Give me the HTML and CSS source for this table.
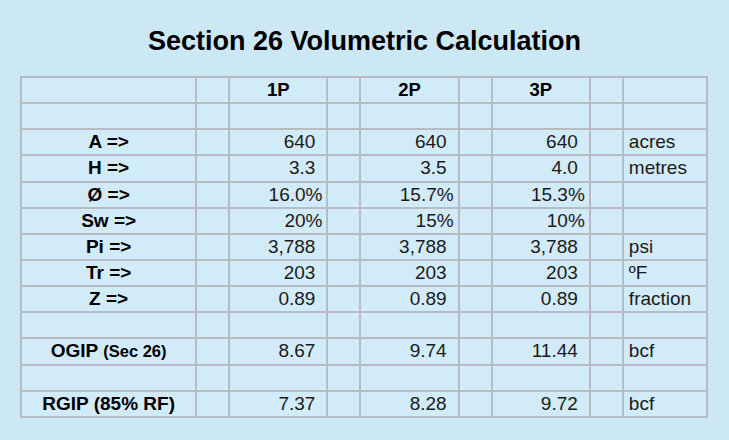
FILE: index.html
```html
<!DOCTYPE html>
<html>
<head>
<meta charset="utf-8">
<link rel="stylesheet" href="styles.css">
</head>
<body>
<div class="page">
  <h1 class="title">Section 26 Volumetric Calculation</h1>
  <table class="calc">
    <colgroup>
      <col class="c-label"><col class="c-gap"><col class="c-val"><col class="c-gap"><col class="c-val"><col class="c-gap2"><col class="c-val"><col class="c-gap"><col class="c-unit">
    </colgroup>
    <tr class="head"><td></td><td></td><td class="h">1P</td><td></td><td class="h">2P</td><td></td><td class="h">3P</td><td></td><td></td></tr>
    <tr><td></td><td></td><td></td><td></td><td></td><td></td><td></td><td></td><td></td></tr>
    <tr><td class="lbl">A =&gt;</td><td></td><td class="num">640</td><td></td><td class="num">640</td><td></td><td class="num">640</td><td></td><td class="unit">acres</td></tr>
    <tr><td class="lbl">H =&gt;</td><td></td><td class="num">3.3</td><td></td><td class="num">3.5</td><td></td><td class="num">4.0</td><td></td><td class="unit">metres</td></tr>
    <tr><td class="lbl">Ø =&gt;</td><td></td><td class="num pct">16.0%</td><td></td><td class="num pct">15.7%</td><td></td><td class="num pct">15.3%</td><td></td><td class="unit"></td></tr>
    <tr><td class="lbl">Sw =&gt;</td><td></td><td class="num pct">20%</td><td></td><td class="num pct">15%</td><td></td><td class="num pct">10%</td><td></td><td class="unit"></td></tr>
    <tr><td class="lbl">Pi =&gt;</td><td></td><td class="num">3,788</td><td></td><td class="num">3,788</td><td></td><td class="num">3,788</td><td></td><td class="unit">psi</td></tr>
    <tr><td class="lbl">Tr =&gt;</td><td></td><td class="num">203</td><td></td><td class="num">203</td><td></td><td class="num">203</td><td></td><td class="unit">ºF</td></tr>
    <tr><td class="lbl">Z =&gt;</td><td></td><td class="num">0.89</td><td></td><td class="num">0.89</td><td></td><td class="num">0.89</td><td></td><td class="unit">fraction</td></tr>
    <tr><td></td><td></td><td></td><td></td><td></td><td></td><td></td><td></td><td></td></tr>
    <tr><td class="lbl">OGIP <span class="small">(Sec 26)</span></td><td></td><td class="num">8.67</td><td></td><td class="num">9.74</td><td></td><td class="num">11.44</td><td></td><td class="unit">bcf</td></tr>
    <tr><td></td><td></td><td></td><td></td><td></td><td></td><td></td><td></td><td></td></tr>
    <tr><td class="lbl">RGIP (85% RF)</td><td></td><td class="num">7.37</td><td></td><td class="num">8.28</td><td></td><td class="num">9.72</td><td></td><td class="unit">bcf</td></tr>
  </table>
</div>
</body>
</html>
```

FILE: styles.css
```css
html, body {
  margin: 0;
  padding: 0;
}
body {
  background: #cde8f5;
  width: 729px;
  height: 440px;
  overflow: hidden;
  font-family: "Liberation Sans", Arial, sans-serif;
}
.page {
  padding-top: 25px;
  padding-left: 20px;
}
.title {
  margin: 0 0 19px 0;
  width: 689px;
  text-align: center;
  font-size: 27px;
  line-height: 32px;
  font-weight: bold;
  color: #000;
}
.calc {
  border-collapse: collapse;
  table-layout: fixed;
  width: 688px;
  background: #d1ebf8;
}
.calc td {
  border: 2px solid #b6bcc2;
  height: 24.15px;
  padding: 0;
  font-size: 19px;
  line-height: 22px;
  color: #1a1a1a;
  white-space: nowrap;
  overflow: hidden;
}
.c-label { width: 175px; }
.c-gap { width: 33px; }
.c-gap2 { width: 33px; }
.c-val { width: 98px; }
.c-unit { width: 84px; }
.calc .h {
  text-align: center;
  font-weight: bold;
  font-size: 18.5px;
  color: #000;
}
.calc .lbl {
  text-align: center;
  font-weight: bold;
  font-size: 19px;
  color: #000;
}
.calc .lbl .small {
  font-size: 16.5px;
}
.calc .num {
  text-align: right;
  padding-right: 11px;
}
.calc .num.pct {
  padding-right: 4px;
}
.calc .unit {
  padding-left: 5px;
}
```
